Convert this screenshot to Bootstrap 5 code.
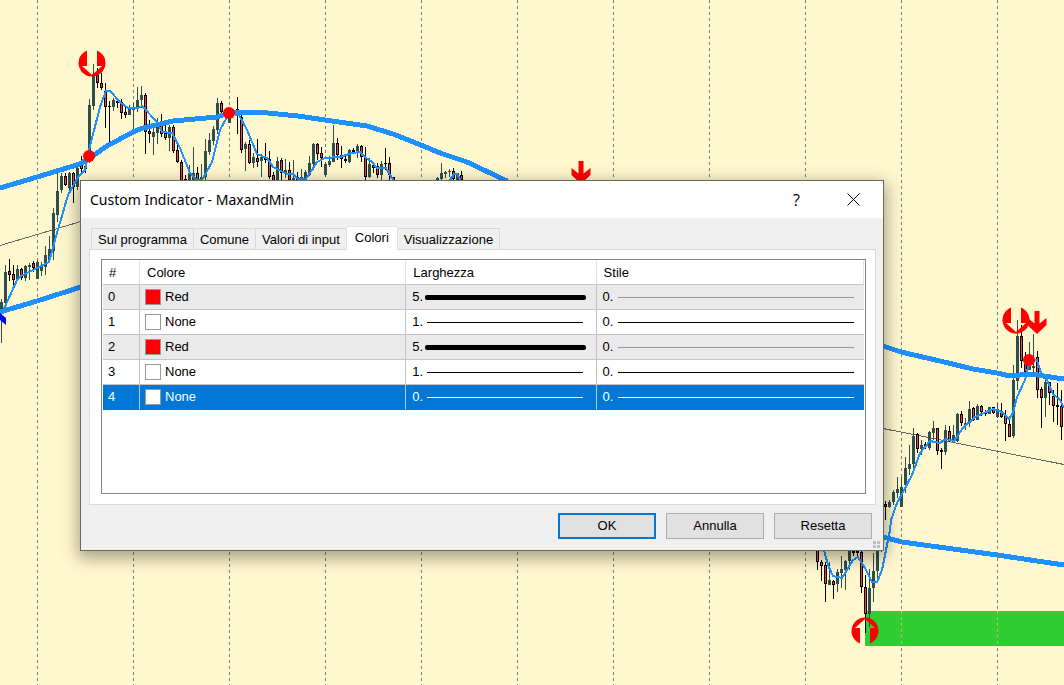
<!DOCTYPE html>
<html lang="it">
<head>
<meta charset="utf-8">
<meta name="viewport" content="width=device-width, initial-scale=1">
<title>Custom Indicator - MaxandMin</title>
<link rel="stylesheet" href="https://cdn.jsdelivr.net/npm/bootstrap@5.3.0/dist/css/bootstrap.min.css">
<style>
  body { background: #fff8cf; font-family: "Liberation Sans", Arial, sans-serif; font-size: 13px; line-height: 16px; color: #000; }
  .chart { height: 100vh; }
  .dialog-window { top: 180px; left: 80px; right: 180px; background: #f0f0f0; border: 1px solid #6e6a58; box-shadow: 0 5px 16px 2px rgba(0,0,0,.36); }
  .title-bar { height: 37px; padding-left: 9px; padding-right: 1px; }
  .title-bar h1 { font: 14px/20px "Noto Sans", "Open Sans", sans-serif; }
  .title-btn { width: 57px; height: 37px; border: 0; background: none; padding: 0; font: 16px/20px "Open Sans", sans-serif; color: #000; }
  .dialog-body { padding: 8px 7px 3px 8px; }
  .tab-strip { padding-left: 2px; --bs-nav-tabs-border-width: 0; border: 0; }
  .tab-strip .nav-link { height: 21px; padding: 3px 6px 0; margin: 0 -1px 0 0; border: 1px solid #d9d9d9; border-bottom: 0; border-radius: 0; color: #000; background: #f0f0f0; white-space: nowrap; }
  .tab-strip .nav-link.active { height: 24px; padding: 3px 8px; background: #fff; margin-bottom: -1px; position: relative; z-index: 1; }
  .tab-panel { border: 1px solid #d9d9d9; background: #fff; padding: 9px 9px 10px 11px; }
  .grid-box { border: 1px solid #828790; height: 235px; padding: 1px; }
  .grid-table { table-layout: fixed; border-collapse: separate; border-spacing: 0; line-height: 24px; }
  .grid-table th, .grid-table td { padding: 0 0 0 5px; height: 25px; border: 0 solid #c4c4c4; border-width: 0 1px 1px 0; font-weight: 400; }
  .grid-table th { height: 24px; line-height: 22px; padding-top: 1px; border-right-color: #e2e2e2; padding-left: 7px; }
  .grid-table th:first-child { padding-left: 6px; }
  .col-index { width: 37px; }
  .col-colour { width: 35%; }
  .col-width { width: 25%; }
  .grid-table td:nth-child(3) { padding: 0 13px 0 6px; }
  .grid-table td:nth-child(4) { padding: 0 10px 0 6px; border-right: 0; }
  .grid-table tbody tr:nth-child(odd) { background: #eaeaea; }
  .grid-table tbody tr.selected { background: #0078d7; color: #fff; }
  .grid-table tr.selected td { border-bottom-color: #0078d7; }
  .swatch { width: 16px; height: 16px; border: 1px solid #999; background: #fff; margin-right: 4px; }
  .swatch-red { background: #f00; }
  .pen-no { width: 15px; }
  .pen { height: 1px; background: currentColor; }
  .pen-thick { height: 5px; border-radius: 2px; margin: 0 -3px 0 -2px; }
  .pen-grey { background: #999; }
  .button-row { gap: 10px; padding: 8px 4px 8px 0; }
  .dialog-btn { width: 98px; height: 26px; padding: 0; border: 1px solid #adadad; background: #e1e1e1; color: #000; }
  .dialog-btn.default { border: 2px solid #0078d7; }
  .size-grip { right: 3px; bottom: 2px; }
</style>
</head>
<body class="position-relative overflow-hidden">
<svg class="chart d-block w-100" viewBox="0 0 1064 685" preserveAspectRatio="xMinYMin slice" aria-hidden="true" shape-rendering="crispEdges">
  <path d="M865 611H1064V646H865Z" fill="#32cd32"/>
  <g id="gridLines" stroke="#708090" stroke-dasharray="3 3"></g>
  <path d="M901.500 611V646M997.500 611V646" stroke="#a0c878" stroke-dasharray="3 3"/>
  <path d="M0 245.500L81 221.500M883 428.500L1064 464.500" fill="none" stroke="#696969"/>
  <g id="candles"></g>
  <g fill="none" stroke="#1e90ff" stroke-width="2" stroke-linejoin="round">
    <path d="M3 311L17 280 21 276 37 268 49 262 57 233 68 195 78 177 85 170 89 150 100 107 106 91H110L120 102 128 108H138L142 106 157 122 162 132 172 133 180 148 190 173 197 180H202L212 162 220 130 227 117 231 114 239 115 247 130 257 154 267 158 273 167 287 174H293L298 179H306L317 162 325 158 340 157 352 153 360 152 365 157 372 162 377 168H386L393 180M450 180L454 174H457L461 181"/>
    <path d="M824 550L828 565 833 576 842 578 853 560 858 557 865 568 872 582H877L882 570 890 530 891 520 897 503 902 494 912 475 920 453 930 441 940 443 946 439 954 441 963 428 975 417 993 409 1002 412 1009 419 1013 413 1017 397 1025 380 1029 362 1037 360 1041 373 1047 380 1053 394 1060 400 1064 408"/>
    <g stroke-width="5">
      <path d="M0 188L37 177 80 164 97 153 107 146 133 132 143 128 173 121 217 117 229 113 263 112.500 298 116 325 120 367 126 393 134 421 145 440 153 467 162 507 181"/>
      <path d="M0 312L37 301 81 287M883 346L901 352 940 361 973 369 997 373 1010 376 1030 374 1064 379M883 537L902 542 997 555 1064 565"/>
    </g>
  </g>
  <g shape-rendering="auto" fill="#f00">
    <circle cx="89" cy="156" r="6"/><circle cx="229" cy="113" r="6"/><circle cx="1029" cy="360" r="6"/>
    <path d="M0 313L6 318V325L0 320Z" fill="#00f"/>
    <defs>
      <path id="ringArrow" d="M-5 -12.500A13.500 13.500 0 1 0 5 -12.500V3H10L0 12L-10 3H-5Z"/>
      <path id="arrow" d="M-2.500 -23H2.500V-10.500L9.500 -16V-9L0 0L-9.500 -9V-16L-2.500 -10.500Z"/>
    </defs>
    <use href="#ringArrow" transform="translate(92 63)"/>
    <use href="#ringArrow" transform="translate(1016 320)"/>
    <use href="#ringArrow" transform="translate(865 631) scale(1 -1)"/>
    <use href="#arrow" transform="translate(581 184)"/>
    <use href="#arrow" transform="translate(1037 334)"/>
  </g>
</svg>

<main class="dialog-window position-absolute" role="dialog" aria-labelledby="dialogTitle">
  <header class="title-bar d-flex align-items-center bg-white">
    <h1 id="dialogTitle" class="m-0 me-auto">Custom Indicator - MaxandMin</h1>
    <button type="button" class="title-btn" aria-label="Guida">?</button>
    <button type="button" class="title-btn" aria-label="Chiudi"><svg width="13" height="13" viewBox="0 0 13 13" stroke="#000" class="d-block mx-auto"><path d="M.5 .5L12.500 12.500M12.500 .5L.5 12.500"/></svg></button>
  </header>
  <div class="dialog-body">
    <ul class="nav nav-tabs tab-strip flex-nowrap align-items-end">
      <li class="nav-item"><a href="#" class="nav-link">Sul programma</a></li>
      <li class="nav-item"><a href="#" class="nav-link">Comune</a></li>
      <li class="nav-item"><a href="#" class="nav-link">Valori di input</a></li>
      <li class="nav-item"><a href="#" class="nav-link active" aria-current="page">Colori</a></li>
      <li class="nav-item"><a href="#" class="nav-link">Visualizzazione</a></li>
    </ul>
    <div class="tab-panel">
      <div class="grid-box">
        <table class="grid-table w-100">
          <colgroup><col class="col-index"><col class="col-colour"><col class="col-width"><col></colgroup>
          <thead><tr><th scope="col">#</th><th scope="col">Colore</th><th scope="col">Larghezza</th><th scope="col">Stile</th></tr></thead>
          <tbody>
            <tr>
              <td>0</td>
              <td><div class="d-flex align-items-center"><span class="swatch swatch-red"></span>Red</div></td>
              <td><div class="d-flex align-items-center"><span class="pen-no">5.</span><span class="pen pen-thick flex-grow-1"></span></div></td>
              <td><div class="d-flex align-items-center"><span class="pen-no">0.</span><span class="pen pen-grey flex-grow-1"></span></div></td>
            </tr>
            <tr>
              <td>1</td>
              <td><div class="d-flex align-items-center"><span class="swatch"></span>None</div></td>
              <td><div class="d-flex align-items-center"><span class="pen-no">1.</span><span class="pen flex-grow-1"></span></div></td>
              <td><div class="d-flex align-items-center"><span class="pen-no">0.</span><span class="pen flex-grow-1"></span></div></td>
            </tr>
            <tr>
              <td>2</td>
              <td><div class="d-flex align-items-center"><span class="swatch swatch-red"></span>Red</div></td>
              <td><div class="d-flex align-items-center"><span class="pen-no">5.</span><span class="pen pen-thick flex-grow-1"></span></div></td>
              <td><div class="d-flex align-items-center"><span class="pen-no">0.</span><span class="pen pen-grey flex-grow-1"></span></div></td>
            </tr>
            <tr>
              <td>3</td>
              <td><div class="d-flex align-items-center"><span class="swatch"></span>None</div></td>
              <td><div class="d-flex align-items-center"><span class="pen-no">1.</span><span class="pen flex-grow-1"></span></div></td>
              <td><div class="d-flex align-items-center"><span class="pen-no">0.</span><span class="pen flex-grow-1"></span></div></td>
            </tr>
            <tr class="selected" aria-selected="true">
              <td>4</td>
              <td><div class="d-flex align-items-center"><span class="swatch"></span>None</div></td>
              <td><div class="d-flex align-items-center"><span class="pen-no">0.</span><span class="pen flex-grow-1"></span></div></td>
              <td><div class="d-flex align-items-center"><span class="pen-no">0.</span><span class="pen flex-grow-1"></span></div></td>
            </tr>
          </tbody>
        </table>
      </div>
    </div>
    <div class="button-row d-flex justify-content-end">
      <button type="button" class="dialog-btn default">OK</button>
      <button type="button" class="dialog-btn">Annulla</button>
      <button type="button" class="dialog-btn">Resetta</button>
    </div>
  </div>
  <svg class="size-grip position-absolute" width="7" height="7" viewBox="0 0 7 7" fill="#bfbfbf" aria-hidden="true"><path d="M0 0H3V3H0ZM4 0H7V3H4ZM0 4H3V7H0ZM4 4H7V7H4Z"/></svg>
</main>

<script src="https://cdn.jsdelivr.net/npm/bootstrap@5.3.0/dist/js/bootstrap.bundle.min.js"></script>
<script>
  // One candle per entry: x, high, low, body top, body bottom; a trailing 1 marks a falling candle.
  const candles = [
    [1,299,343,302,312],[5,265,305,272,303],[9,259,281,271,275,1],[13,265,285,274,280,1],[17,265,280,269,279],
    [21,268,280,269,278,1],[25,265,281,266,278],[29,263,280,265,267],[33,261,272,263,268,1],[37,260,279,262,279],
    [41,262,276,266,271],[45,246,275,255,267],[49,236,262,249,260],[53,208,260,213,251],[57,173,222,191,215],
    [61,173,193,176,190],[65,173,186,176,185,1],[69,172,190,173,188],[73,172,203,173,187,1],[77,167,190,168,187],
    [81,156,172,163,169,1],[85,162,173,166,169,1],[89,99,163,105,162],[93,64,110,74,106],[97,68,88,75,83,1],
    [101,73,90,83,88,1],[105,83,128,91,107,1],[109,101,142,106,107,1],[113,98,111,100,107],[117,98,108,101,103,1],
    [121,99,119,102,113,1],[125,105,118,112,115,1],[129,105,115,109,115],[133,103,133,109,110],[137,87,112,100,108],
    [141,86,108,95,100],[145,93,154,95,132,1],[149,120,143,131,134,1],[153,128,155,132,137],[157,118,144,123,133],
    [161,114,137,123,134,1],[165,125,140,133,138,1],[169,125,151,127,138],[173,125,153,127,151,1],[177,143,163,150,162,1],
    [181,160,180,162,181,1],[185,175,181,179,181,1],[189,165,181,173,180],[193,147,181,173,180],[197,167,181,173,180,1],
    [201,164,181,177,181],[205,139,180,151,177],[209,133,155,140,152],[213,126,145,129,141],[217,98,134,103,130],
    [221,101,114,103,112,1],[229,116,123,117,123],[237,97,134,109,115,1],[241,115,153,117,150,1],[245,142,171,144,149],
    [249,140,164,144,163,1],[253,153,168,157,163],[257,139,167,158,162,1],[261,154,177,157,161],[265,143,163,157,160,1],
    [269,151,179,159,177,1],[273,172,181,175,181,1],[277,157,181,161,181],[281,158,181,160,173,1],[285,159,178,170,174],
    [289,162,180,170,180,1],[293,160,181,178,181],[297,172,181,177,180,1],[301,169,181,177,180],[305,170,180,172,178],
    [309,156,176,163,175],[313,143,170,144,164],[317,143,160,144,154,1],[321,147,167,153,158,1],[325,162,177,164,175],
    [329,156,167,161,165],[333,125,162,143,162],[337,138,160,143,155,1],[341,146,168,155,159,1],[345,155,163,159,161,1],
    [349,149,163,150,162],[353,148,153,150,152,1],[357,144,158,146,153],[361,145,162,146,157,1],[365,147,180,157,177,1],
    [369,158,178,164,177],[373,164,173,165,168,1],[377,163,178,166,175,1],[381,161,181,164,175],[385,148,170,163,164,1],
    [389,157,180,163,175,1],[393,177,181,177,181,1],[437,177,181,178,181],[441,163,180,173,179],[445,171,178,172,174],
    [449,169,177,171,172],[453,168,180,171,179,1],[457,173,180,173,180],[461,171,180,175,180,1],
    [817,545,570,550,562,1],[821,560,581,562,566,1],[825,562,602,565,584,1],[829,562,585,580,585],[833,580,599,581,585,1],
    [837,569,592,572,584],[841,556,588,569,573],[845,560,590,561,570],[849,545,570,550,561],[853,545,556,551,553,1],
    [857,545,556,551,553,1],[861,550,593,552,587,1],[865,575,633,587,614,1],[869,569,627,588,614],[873,553,602,571,588],
    [877,545,582,550,571],[881,530,552,535,550],[885,501,520,504,507,1],[889,500,508,502,507],[893,490,505,492,502],
    [897,477,498,489,493],[901,477,507,487,507],[905,457,493,468,485],[909,445,475,464,469],[913,428,473,436,464],
    [917,433,453,434,449,1],[921,440,455,445,449],[925,442,449,444,447,1],[929,431,450,432,448],[933,421,440,428,433],
    [937,428,455,428,451,1],[941,448,469,450,452,1],[945,425,455,430,452],[949,426,442,431,440,1],[953,425,441,435,440],
    [957,413,442,414,441],[961,411,426,414,423,1],[965,418,430,423,425],[969,401,427,409,423],[973,407,421,408,420,1],
    [977,404,420,406,420],[981,405,416,406,412,1],[985,410,416,412,414,1],[989,407,414,407,414],[993,407,414,407,413,1],
    [997,403,418,409,417],[1001,403,418,411,417,1],[1005,410,441,416,424,1],[1009,416,437,424,437,1],[1013,365,438,380,436],
    [1017,320,390,336,381],[1021,325,368,336,361,1],[1025,352,380,364,372,1],[1029,342,370,366,370],[1033,334,372,366,368],
    [1037,351,398,357,390,1],[1041,387,428,389,398,1],[1045,378,417,382,398],[1049,382,405,382,393,1],[1053,390,422,396,406,1],
    [1057,383,425,405,407,1],[1061,390,440,406,427,1]
  ];
  const rect = (x, y, w, h, fill) => `<rect x="${x}" y="${y}" width="${w}" height="${h}" fill="${fill}"/>`;
  document.getElementById('candles').innerHTML = candles.map(([x, high, low, top, bottom, falling]) => {
    const ink = falling ? '#000' : '#2f4f4f';
    const inner = falling && bottom - top > 2 ? rect(x, top + 1, 1, bottom - top - 2, '#ff4500') : '';
    return rect(x, high, 1, low - high, ink) + rect(x - 1, top, 3, bottom - top, ink) + inner;
  }).join('');

  let lines = '';
  for (let x = 37; x < 1064; x += 96) lines += `<path d="M${x + 0.5} 0V685"/>`;
  document.getElementById('gridLines').innerHTML = lines;
</script>
</body>
</html>
